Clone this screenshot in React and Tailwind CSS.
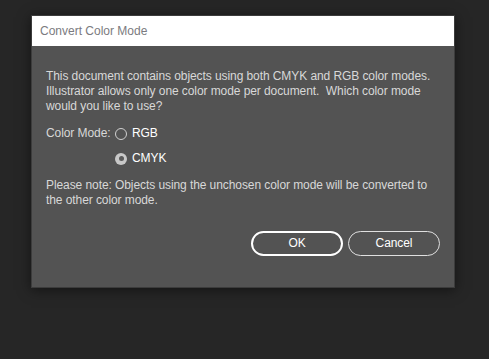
export default function App() {
  return (
    <div className="min-h-[359px] w-full bg-[#262626] pl-[31px] pt-[15px] font-['Liberation_Sans',Arial,sans-serif] text-[12px]">
      <div className="flex h-[273px] w-[424px] flex-col border border-[#3c3c3c] bg-[#535353] shadow-[0_2px_12px_rgba(0,0,0,0.5)]">
        {/* Title bar */}
        <div className="flex h-[30px] items-center bg-white pl-[8px] text-[#7b7b80]">
          Convert Color Mode
        </div>

        {/* Body */}
        <div className="flex flex-1 flex-col px-[14px] pt-[23px] leading-[15px] tracking-[-0.08px] text-[#d8d8d8]">
          <p>
            This document contains objects using both CMYK and RGB color modes.
            <br />
            Illustrator allows only one color mode per document.&nbsp; Which color mode
            <br />
            would you like to use?
          </p>

          <div className="mt-[12px] flex flex-col gap-[10px]">
            <div className="flex items-center">
              <span className="w-[69px]">Color Mode:</span>
              <label className="flex items-center gap-[5px] text-white">
                <span className="h-[12px] w-[12px] rounded-full border-[1.5px] border-[#d0d0d0]" />
                RGB
              </label>
            </div>
            <div className="flex items-center pl-[69px]">
              <label className="flex items-center gap-[5px] text-white">
                <span className="flex h-[12px] w-[12px] items-center justify-center rounded-full bg-[#c8c8c8]">
                  <span className="h-[5px] w-[5px] rounded-full bg-[#5a5a5a]" />
                </span>
                CMYK
              </label>
            </div>
          </div>

          <p className="mt-[12px]">
            Please note: Objects using the unchosen color mode will be converted to
            <br />
            the other color mode.
          </p>

          <div className="mt-[23px] flex justify-end gap-[5px]">
            <button className="h-[25px] w-[92px] rounded-full border-2 border-white text-white">
              OK
            </button>
            <button className="h-[25px] w-[92px] rounded-full border border-[#e0e0e0] text-white">
              Cancel
            </button>
          </div>
        </div>
      </div>
    </div>
  );
}
